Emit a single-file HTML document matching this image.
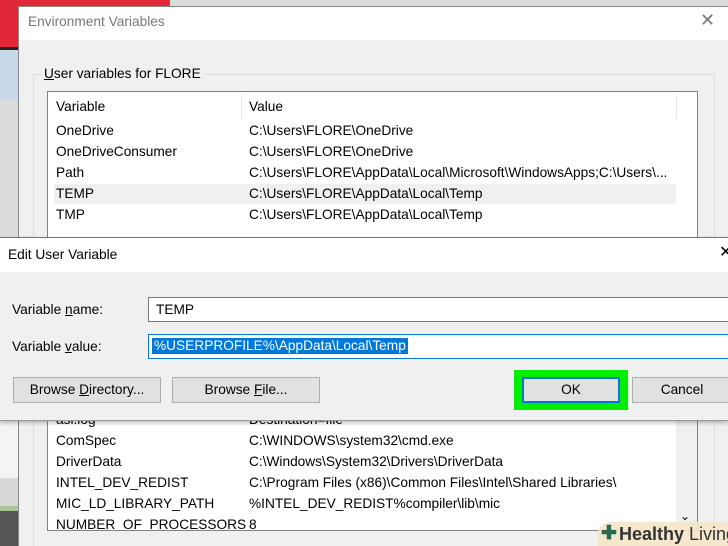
<!DOCTYPE html>
<html style="overflow:hidden"><head><style>
*{margin:0;padding:0;box-sizing:border-box}
html,body{width:728px;height:546px;overflow:hidden}
body{position:relative;background:#dcdcdc;font-family:"Segoe UI","Liberation Sans",sans-serif;font-size:13.7px;color:#000}
.a{position:absolute}
.t{position:absolute;white-space:nowrap;line-height:16px}
.btn{position:absolute;background:#e1e1e1;border:1px solid #adadad;text-align:center;line-height:24px}
</style></head><body>
<div class="a" style="left:0;top:0;width:170px;height:50px;background:#e02838;border-bottom:3px solid #222;border-radius:0 0 60px 0"></div>
<div class="a" style="left:0;top:50px;width:18px;height:50px;background:#c8d8e8"></div>
<div class="a" style="left:0;top:420px;width:18px;height:126px;background:#f4f4f4"></div>
<div class="a" style="left:0;top:478px;width:18px;height:30px;background:#d8d8d8"></div>
<div class="a" style="left:0;top:506px;width:18px;height:5px;background:#a8c890"></div>
<div class="a" style="left:0;top:511px;width:18px;height:35px;background:#555"></div>
<div class="a" style="left:18px;top:6px;width:710px;height:540px;background:#f0f0f0;border:1px solid #888;border-right:none;border-bottom:none"></div>
<div class="a" style="left:19px;top:7px;width:709px;height:33px;background:#fff"></div>
<div class="t" style="left:28px;top:14px;color:#777">Environment Variables</div>
<div class="t" style="left:700px;top:12px;font-size:18px;color:#777">✕</div>
<div class="a" style="left:33px;top:74px;width:682px;height:480px;border:1px solid #dcdcdc"></div>
<div class="t" style="left:42px;top:66px;background:#f0f0f0;padding:0 2px"><u>U</u>ser variables for FLORE</div>
<div class="a" style="left:47px;top:91px;width:651px;height:200px;background:#fff;border:1px solid #828282"></div>
<div class="a" style="left:241px;top:95px;width:1px;height:24px;background:#e5e5e5"></div>
<div class="a" style="left:676px;top:95px;width:1px;height:24px;background:#e5e5e5"></div>
<div class="a" style="left:54px;top:184px;width:622px;height:20px;background:#f0f0f0"></div>
<div class="t" style="left:56px;top:99px">Variable</div><div class="t" style="left:249px;top:99px">Value</div>
<div class="t" style="left:56px;top:123px">OneDrive</div><div class="t" style="left:249px;top:123px">C:\Users\FLORE\OneDrive</div>
<div class="t" style="left:56px;top:144px">OneDriveConsumer</div><div class="t" style="left:249px;top:144px">C:\Users\FLORE\OneDrive</div>
<div class="t" style="left:56px;top:165px">Path</div><div class="t" style="left:249px;top:165px">C:\Users\FLORE\AppData\Local\Microsoft\WindowsApps;C:\Users\...</div>
<div class="t" style="left:56px;top:186px">TEMP</div><div class="t" style="left:249px;top:186px">C:\Users\FLORE\AppData\Local\Temp</div>
<div class="t" style="left:56px;top:207px">TMP</div><div class="t" style="left:249px;top:207px">C:\Users\FLORE\AppData\Local\Temp</div>
<div class="a" style="left:47px;top:400px;width:651px;height:131px;background:#fff;border:1px solid #828282"></div>
<div class="a" style="left:676px;top:401px;width:21px;height:129px;background:#f0f0f0"></div>
<div class="t" style="left:680px;top:508px;font-size:12px">⌄</div>
<div class="t" style="left:56px;top:412px">asl.log</div><div class="t" style="left:249px;top:412px">Destination=file</div>
<div class="t" style="left:56px;top:433px">ComSpec</div><div class="t" style="left:249px;top:433px">C:\WINDOWS\system32\cmd.exe</div>
<div class="t" style="left:56px;top:454px">DriverData</div><div class="t" style="left:249px;top:454px">C:\Windows\System32\Drivers\DriverData</div>
<div class="t" style="left:56px;top:475px">INTEL_DEV_REDIST</div><div class="t" style="left:249px;top:475px">C:\Program Files (x86)\Common Files\Intel\Shared Libraries\</div>
<div class="t" style="left:56px;top:496px">MIC_LD_LIBRARY_PATH</div><div class="t" style="left:249px;top:496px">%INTEL_DEV_REDIST%compiler\lib\mic</div>
<div class="a" style="left:48px;top:517px;width:628px;height:13px;overflow:hidden"><div class="t" style="left:8px;top:0">NUMBER_OF_PROCESSORS</div><div class="t" style="left:201px;top:0">8</div></div>
<div class="a" style="left:0;top:237px;width:728px;height:184px;background:#f0f0f0;border-top:1px solid #777;border-bottom:1px solid #999;box-shadow:0 2px 4px rgba(0,0,0,.25)"></div>
<div class="a" style="left:0;top:238px;width:728px;height:34px;background:#fff"></div>
<div class="t" style="left:8px;top:247px">Edit User Variable</div>
<div class="t" style="left:719px;top:245px;font-size:16px">✕</div>
<div class="t" style="left:12px;top:302px">Variable <u>n</u>ame:</div>
<div class="t" style="left:12px;top:339px">Variable <u>v</u>alue:</div>
<div class="a" style="left:148px;top:297px;width:582px;height:25px;background:#fff;border:1px solid #7a7a7a"></div>
<div class="t" style="left:156px;top:302px">TEMP</div>
<div class="a" style="left:148px;top:334px;width:582px;height:25px;background:#fff;border:1px solid #0078d7"></div>
<div class="t" style="left:152px;top:338px;background:#0078d7;color:#fff;padding:0 2px">%USERPROFILE%\AppData\Local\Temp</div>
<div class="btn" style="left:13px;top:377px;width:148px;height:26px">Browse <u>D</u>irectory...</div>
<div class="btn" style="left:172px;top:377px;width:148px;height:26px">Browse <u>F</u>ile...</div>
<div class="a" style="left:514px;top:370px;width:114px;height:40px;background:#00ee00"></div>
<div class="btn" style="left:522px;top:377px;width:98px;height:26px;border:2px solid #0078d7;line-height:22px">OK</div>
<div class="btn" style="left:632px;top:377px;width:100px;height:26px">Cancel</div>
<div class="a" style="left:598px;top:522px;width:130px;height:24px;background:rgba(245,230,200,.9);border-radius:12px 0 0 0"></div>
<div class="t" style="left:601px;top:523px;font-size:19px;line-height:22px;color:#2a6a50;font-weight:bold">✚</div>
<div class="t" style="left:619px;top:523px;font-size:18px;line-height:22px;color:#333"><b>Healthy</b> Living</div>
</body></html>
